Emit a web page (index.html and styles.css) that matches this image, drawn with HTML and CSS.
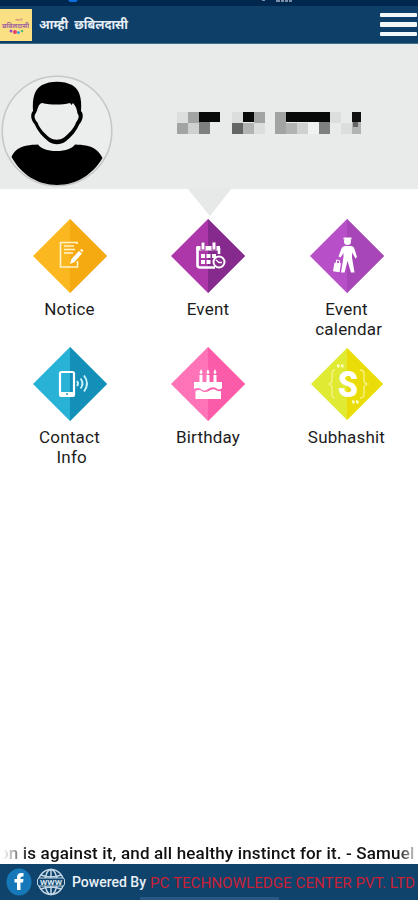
FILE: index.html
```html
<!DOCTYPE html>
<html lang="en">

<head>
    <meta charset="UTF-8">
    <meta name="viewport" content="width=device-width, initial-scale=1.0">
    <title>आम्ही छबिलदासी</title>
    <link rel="stylesheet" href="styles.css">
</head>

<body>
    <div class="statusbar">
        <svg width="418" height="6" viewBox="0 0 418 6">
            <path d="M68 0h10l-2 2h-6z" fill="#0b6fe0" />
            <path d="M262 0h3v1h-3zM276 0h4v2h-4zM281 0h3v2h-3zM285 0h3v2h-3zM289 0h3v2h-3z" fill="#7c8fa6" />
        </svg>
    </div>

    <header class="header">
        <svg class="logo" width="32" height="32" viewBox="0 0 32 32">
            <rect width="32" height="32" fill="#fbe083" />
            <text x="15" y="11.500" font-size="3.500" fill="#c0588a">आम्ही</text>
            <text x="2" y="18.500" font-size="5.500" font-weight="bold" fill="#a0649f" textLength="27" lengthAdjust="spacingAndGlyphs">छबिलदासी</text>
            <circle cx="11" cy="22" r="1.500" fill="#9a4bd0" />
            <circle cx="15" cy="23" r="2" fill="#e83f6b" />
            <circle cx="18.500" cy="23.500" r="1.500" fill="#38a7dc" />
            <circle cx="22" cy="22" r="1.300" fill="#55b972" />
        </svg>
        <h1>आम्ही छबिलदासी</h1>
        <button class="menu" aria-label="Menu"><span></span><span></span><span></span></button>
    </header>

    <section class="profile">
        <svg class="avatar" width="112" height="112" viewBox="0 0 112 112">
            <circle cx="56" cy="56" r="54.800" fill="#eceeee" stroke="#c6c8c8" stroke-width="1.600" />
            <path d="M10.500 82C14 74 20 70 37 69.500c3 4 9 6.500 18.500 6.500S71 73.500 74 69.500c17 .5 23 4.500 27.500 13.500C92 99 76 110 56 110S20 99 10.500 82z" fill="#000" />
            <path d="M32 36c-1-14 2-22 9-26 8-4.500 22-4.500 30 0 7 4 10 12 9 26 3 3 2 9-1.500 13-3 7-8 13-14 17.500-5 3.500-12 3.500-17 0-6-4.500-11-10.500-14-17.500C30 45 29 39 32 36z" fill="#000" />
            <path d="M35 38c2-4 2-9 6-10 9 2 20 2 28 0l1.500 2 1.500-2c3 3 4 7 4.500 10.500 2.500 3 .5 6-1.500 9-2 6-7 11-12 15-4.500 3-10 3-14.500 0-5-4-10-9-12-15-3-3-4-7-1.500-9.500z" fill="#eceeee" />
        </svg>
        <svg class="name" width="188" height="22" viewBox="0 0 188 22" shape-rendering="crispEdges">
            <path d="M22 0h21v10H22zM66 0h11v10H66zM109 0h44v10h-44z" fill="#080909" />
            <path d="M175 0h9v10h-9z" fill="#111" />
            <path d="M0 0h11v11H0zM55 0h11v11H55zM153 0h11v11h-11zM77 11h11v11H77zM164 11h11v11h-11z" fill="#dcdddd" />
            <path d="M11 0h11v11H11zM77 0h11v11H77zM98 0h11v22H98zM0 11h11v11H0z" fill="#a2a4a3" />
            <path d="M66 11h11v11H66zM109 11h11v11h-11zM175 10h9v12h-9z" fill="#b2b4b3" />
            <path d="M11 11h11v11H11zM120 11h11v11h-11z" fill="#cfd1d0" />
            <path d="M22 10h11v12H22zM142 10h11v12h-11z" fill="#7e8080" />
            <path d="M55 11h11v11H55z" fill="#646666" />
            <path d="M131 10h11v12h-11z" fill="#f0f1f1" />
            <path d="M176 10h5v5h-5z" fill="#666" />
        </svg>
        <span class="pointer"></span>
    </section>

    <main class="grid">
        <a class="item">
            <svg width="76" height="76" viewBox="0 0 76 76">
                <path d="M38 1L75 38 38 75 1 38z" fill="#fbb71f" />
                <path d="M38 1L75 38 38 75z" fill="#f5aa12" />
                <g fill="none" stroke="#fff3cf" stroke-width="1.600">
                    <path d="M45 26V24.500H28.500V49H45.500V43" />
                    <path d="M32 28h10M32 31.500h11M32 35h9" />
                </g>
                <path d="M47 33l3 2.500-7.500 8.500-4.500 2 1.500-5zM48 32l1.500-1 1.800 1.600-1 1.600z" fill="#fff" />
            </svg>
            <span>Notice</span>
        </a>
        <a class="item">
            <svg width="76" height="76" viewBox="0 0 76 76">
                <path d="M38 1L75 38 38 75 1 38z" fill="#ab37a9" />
                <path d="M38 1L75 38 38 75z" fill="#862b8d" />
                <path d="M27.500 29v18q0 2.500 2.500 2.500h15M49 30v6" fill="none" stroke="#fff" stroke-width="2.600" />
                <path d="M26.500 28h23.500v4.500H26.500z" fill="#fff" />
                <path d="M31 24h4v8h-4zM42 24h4v8h-4z" fill="#fff" stroke="#963199" />
                <path d="M31 36h4v4h-4zM36.500 36h4v4h-4zM42 36h4v4h-4zM31 42h4v4h-4zM36.500 42h4v4h-4z" fill="#fff" />
                <circle cx="49" cy="44" r="5.500" fill="#8b2c91" stroke="#fff" stroke-width="2" />
                <path d="M46 42l3 2.500h3" fill="none" stroke="#fff" stroke-width="1.300" />
            </svg>
            <span>Event</span>
        </a>
        <a class="item">
            <svg width="76" height="76" viewBox="0 0 76 76">
                <path d="M38 1L75 38 38 75 1 38z" fill="#b750c8" />
                <path d="M38 1L75 38 38 75z" fill="#a747b7" />
                <g fill="#fff">
                    <circle cx="38.500" cy="23.500" r="3.500" />
                    <path d="M34.500 19.500h8v2h-8z" />
                    <path d="M36 28h6q2.500 0 3.500 3l2.500 8-1.500 1.500-3.500-6v5l2.500 15h-3.500L38.500 43 35.500 54.500H32L34.500 39v-4l-3 4.500-2-1 3-8q1-2.500 3.500-2.500z" />
                    <path d="M25.500 44.500l6.500.8-1.500 9-6.500-1z" />
                </g>
                <path d="M27.500 45v-3l3 .500v3" fill="none" stroke="#fff" />
            </svg>
            <span>Event<br>&nbsp;calendar</span>
        </a>
        <a class="item">
            <svg width="76" height="76" viewBox="0 0 76 76">
                <path d="M38 1L75 38 38 75 1 38z" fill="#27b2d6" />
                <path d="M38 1L75 38 38 75z" fill="#138fb8" />
                <rect x="28" y="26" width="14" height="24" rx="1.500" fill="none" stroke="#fff" stroke-width="2.200" />
                <path d="M28 46h14v4H28z" fill="#fff" />
                <circle cx="35" cy="48" r="1" fill="#149bc2" />
                <g fill="none" stroke="#c9f3fc" stroke-width="1.900">
                    <path d="M45 35q2 2.500 0 5M48.500 32.500q4 5 0 10M52 29.500q6 8 0 16" />
                </g>
            </svg>
            <span>Contact<br>&nbsp;Info</span>
        </a>
        <a class="item">
            <svg width="76" height="76" viewBox="0 0 76 76">
                <path d="M38 1L75 38 38 75 1 38z" fill="#ff74b9" />
                <path d="M38 1L75 38 38 75z" fill="#fb5caa" />
                <g fill="#fff">
                    <path d="M29.500 29h3v8h-3zM36.500 29h3v8h-3zM43.500 29h3v8h-3z" />
                    <path d="M31 23l1.600 3.500L31 28.500l-1.600-2zM38 23l1.600 3.500L38 28.500l-1.600-2zM45 23l1.600 3.500L45 28.500l-1.600-2z" />
                    <path d="M24 36h28v6q-3 3-6 0-4-2-8 1-4 3-7 0-4-2-7 0z" />
                    <path d="M25.500 45q4-2 7 .5 4 1.500 7-1 4-2.500 7 0 2 1 4.500.5V53H25.500z" />
                </g>
            </svg>
            <span>Birthday</span>
        </a>
        <a class="item">
            <svg width="76" height="76" viewBox="0 0 76 76">
                <path d="M38 2L74 38 38 74 2 38z" fill="#e1ea32" />
                <path d="M38 2L74 38 38 74z" fill="#e9dc09" />
                <text class="letter" x="39" y="51" textLength="20" lengthAdjust="spacingAndGlyphs">S</text>
                <g fill="none" stroke="#f5f48a" stroke-width="1.300">
                    <path d="M26 24q-3 0-3 4v6q0 3-3 4 3 1 3 4v6q0 4 3 4M51 24q4 0 4 4v6q0 3 3 4-3 1-3 4v6q0 4-4 4" />
                </g>
                <path d="M28 18l3 1-1 3-2-1zM32 18l3 1-1 3-2-1zM43 54l3 1-1 3-2-1zM47 54l3 1-1 3-2-1z" fill="#fbfac0" />
            </svg>
            <span>Subhashit</span>
        </a>
    </main>

    <div class="ticker"><p>on is against it, and all healthy instinct for it. - Samuel</p></div>

    <footer class="footer">
        <svg width="26" height="28" viewBox="0 0 26 28">
            <ellipse cx="13" cy="14" rx="12.500" ry="13.500" fill="#1678b9" />
            <path d="M11 22v-7.500H8.500V11H11V9.500q0-4.500 4-4.500h2.500v3.500H16q-1.500 0-1.500 1.500v1h3l-.5 3.500h-2.500V22z" fill="#fff" />
        </svg>
        <svg class="globe" width="28" height="28" viewBox="0 0 28 28">
            <g fill="none" stroke="#c4d8e6" stroke-width="1.500">
                <circle cx="14" cy="14" r="12.500" />
                <ellipse cx="14" cy="14" rx="6" ry="12.500" />
                <path d="M14 1.500v25M4 7q10 4 20 0M4 21q10-4 20 0" />
            </g>
            <rect x=".5" y="10" width="27" height="8" rx="2" fill="#12456d" stroke="#c4d8e6" />
            <text x="3" y="16.500" textLength="22" lengthAdjust="spacingAndGlyphs">WWW</text>
        </svg>
        <span class="powered">Powered By</span>
        <svg class="company" width="268" height="24" viewBox="0 0 268 24">
            <text x="1" y="17.500" textLength="265" lengthAdjust="spacingAndGlyphs">PC TECHNOWLEDGE CENTER PVT. LTD</text>
        </svg>
        <span class="navhandle"></span>
    </footer>
</body>

</html>
```
FILE: styles.css
```css
* {
    margin: 0;
    padding: 0;
    box-sizing: border-box;
}

body {
    width: 418px;
    height: 900px;
    display: flex;
    flex-direction: column;
    background: #fff;
    font-family: Roboto, 'Noto Sans', sans-serif;
    overflow: hidden;
}

svg {
    display: block;
    flex-shrink: 0;
}

.statusbar {
    height: 6px;
    background: #00284f;
}

.header {
    height: 38px;
    background: #0d3f68;
    border-bottom: 1px solid #3d7085;
    display: flex;
    align-items: center;
    padding-right: 1px;
}

.logo {
    margin-top: 1px;
}

.header h1 {
    margin-left: 7px;
    font-size: 12.500px;
    line-height: 20px;
    font-weight: bold;
    word-spacing: 3px;
    color: #e5eef5;
    white-space: nowrap;
}

.menu {
    margin-left: auto;
    width: 37px;
    background: none;
    border: none;
    display: flex;
    flex-direction: column;
    gap: 5px;
}

.menu span {
    height: 4.500px;
    border-radius: 1px;
    background: #f2f7fa;
}

.profile {
    height: 145px;
    background: #e8ebea;
    display: flex;
    position: relative;
    flex-shrink: 0;
}

.avatar {
    margin: 31px 0 0 1px;
}

.name {
    margin: 68px 0 0 64px;
}

.pointer {
    position: absolute;
    left: 187px;
    top: 144px;
    width: 45px;
    height: 28px;
    background: #e6e9e8;
    clip-path: polygon(0 0, 100% 0, 51% 100%);
}

.grid {
    display: grid;
    grid-template-columns: 139px 138px 139px;
    grid-auto-rows: 127.500px;
    padding-top: 29px;
}

.item {
    display: flex;
    flex-direction: column;
    align-items: center;
}

.item span {
    margin-top: 5px;
    font-size: 17px;
    line-height: 20px;
    letter-spacing: 0.2px;
    color: #1c1c1c;
    text-align: center;
}

.letter {
    font-size: 37px;
    font-weight: 900;
    fill: #fff;
    text-anchor: middle;
}

.ticker {
    margin-top: auto;
    height: 23px;
    padding: 0 4px;
    overflow: hidden;
    -webkit-mask-image: linear-gradient(90deg, transparent 3px, #000 30px, #000 398px, transparent 420px);
    mask-image: linear-gradient(90deg, transparent 3px, #000 30px, #000 398px, transparent 420px);
}

.ticker p {
    margin-left: -5px;
    font-size: 17px;
    line-height: 24px;
    font-weight: 500;
    letter-spacing: 0.160px;
    color: #111;
    white-space: nowrap;
}

.footer {
    height: 36px;
    background: #10436b;
    display: flex;
    align-items: center;
    padding-left: 6px;
    position: relative;
}

.globe {
    margin-left: 5px;
}

.globe text {
    font-size: 7px;
    font-weight: bold;
    fill: #d6e5ef;
}

.powered {
    width: 74px;
    margin-left: 7px;
    font-size: 14px;
    font-weight: 500;
    color: #e8f0f6;
    white-space: nowrap;
}

.company {
    margin-left: 3px;
}

.company text {
    font-size: 15.500px;
    fill: #c91f36;
}

.navhandle {
    position: absolute;
    left: 140px;
    bottom: 0;
    width: 139px;
    height: 3px;
    background: #285982;
}
```
